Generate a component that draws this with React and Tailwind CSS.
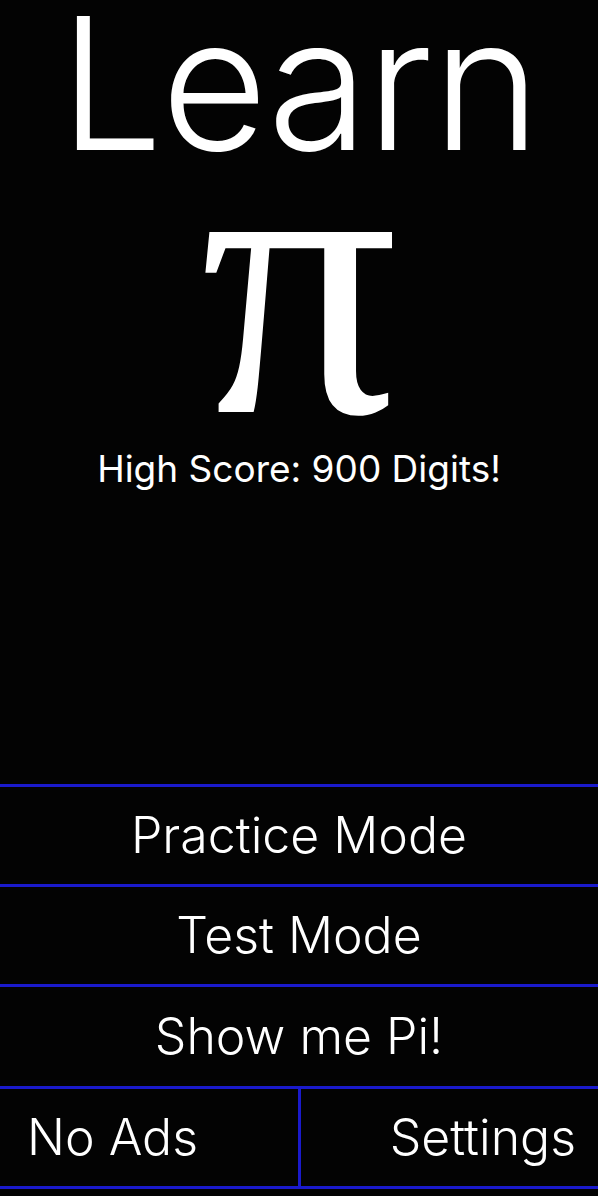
import React from 'react';

const rows = [
    { label: 'Practice Mode', h: 'h-[100px]' },
    { label: 'Test Mode', h: 'h-[100px]' },
    { label: 'Show me Pi!', h: 'h-[102px]' },
];

const App = () => {
    return (
        <div className="w-[598px] h-[1196px] bg-[#030303] text-white flex flex-col font-['Inter','Liberation_Sans',sans-serif] overflow-hidden">
            {/* header */}
            <div className="flex flex-col items-center">
                <h1 className="text-[184px] leading-[166px] font-light tracking-[-2px]">Learn</h1>
                <div className="font-['Liberation_Serif',serif] text-[392px] leading-[180px] h-[180px] mt-[24px]">π</div>
                <p className="text-[37px] leading-none font-normal mt-[80px]">High Score: 900 Digits!</p>
            </div>

            <div className="flex-1" />

            {/* menu */}
            <div className="flex flex-col mb-[7px]">
                {rows.map((r) => (
                    <button
                        key={r.label}
                        className={`${r.h} border-t-[3px] border-[#1a1acc] flex items-center justify-center text-[50px] font-light`}
                    >
                        {r.label}
                    </button>
                ))}
                <div className="h-[103px] border-y-[3px] border-[#1a1acc] flex">
                    <button className="w-[301px] border-r-[3px] border-[#1a1acc] flex items-center pl-[27px] text-[50px] font-light">
                        No Ads
                    </button>
                    <button className="flex-1 flex items-center justify-end pr-[22px] text-[50px] font-light">
                        Settings
                    </button>
                </div>
            </div>
        </div>
    );
};

export default App;
